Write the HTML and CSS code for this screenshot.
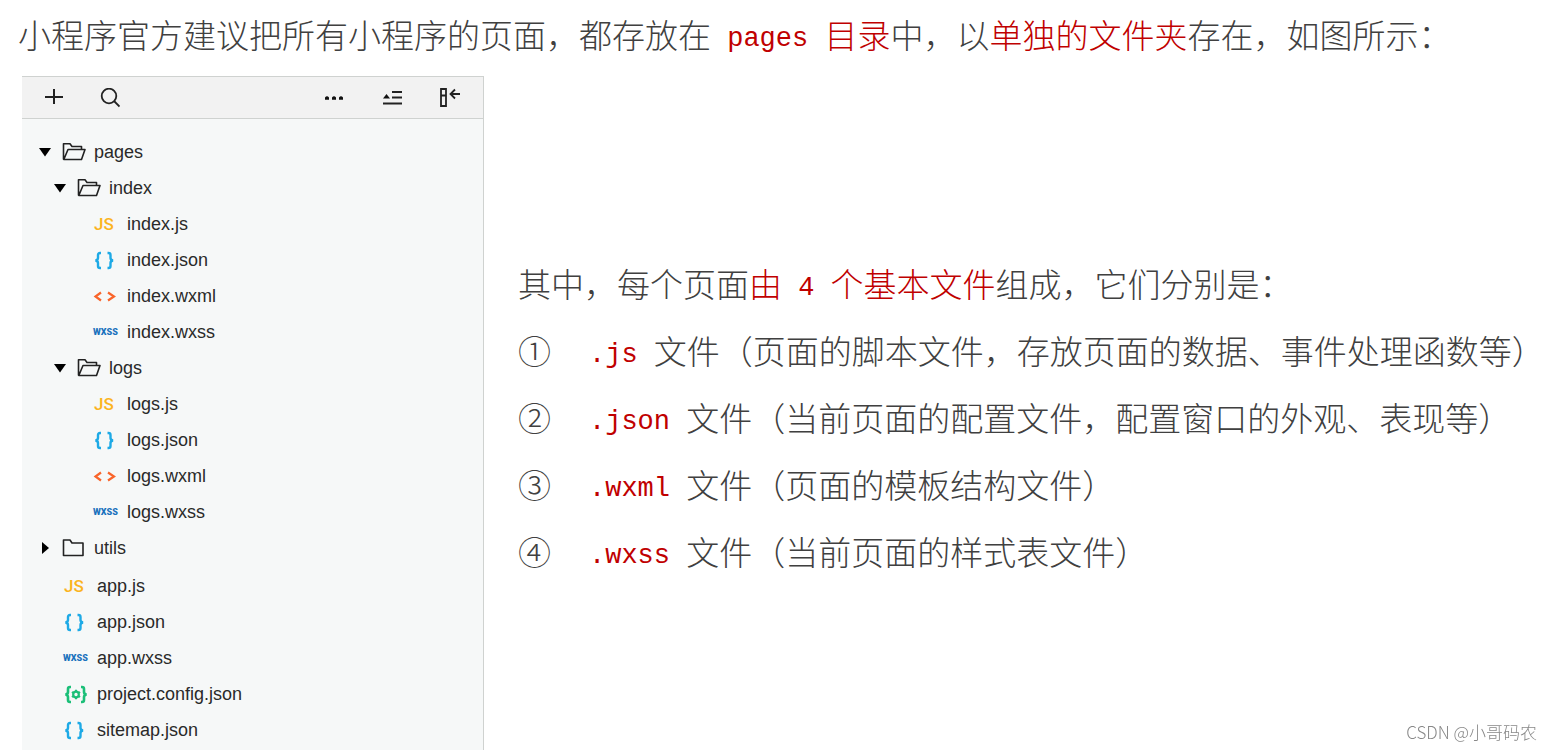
FILE: index.html
```html
<!DOCTYPE html>
<html lang="zh-CN">
<head>
    <meta charset="UTF-8">
    <meta name="viewport" content="width=device-width, initial-scale=1.0">
    <title>小程序页面的组成部分</title>
    <link rel="stylesheet" href="styles.css">
</head>
<body>
    <!-- shared icons -->
    <svg class="sprite" aria-hidden="true">
        <symbol id="arrow-down" viewBox="0 0 12 12"><path d="M0 2h12L6 10.500z"/></symbol>
        <symbol id="arrow-right" viewBox="0 0 12 12"><path d="M3 0v12l7-6z"/></symbol>
        <symbol id="folder-open" viewBox="0 0 24 20">
            <path d="M1.500 17.500V1.800h6.500l2 2.700h9.500v3M1.800 17.500L6 7.500h17l-3.500 10z" fill="none" stroke="#222" stroke-width="1.600" stroke-linejoin="round"/>
        </symbol>
        <symbol id="folder" viewBox="0 0 24 20">
            <path d="M1.500 17.500V2H8l2 3h11v12.500z" fill="none" stroke="#222" stroke-width="1.600" stroke-linejoin="round"/>
        </symbol>
        <symbol id="json" viewBox="0 0 26 20">
            <path d="M8 3H7Q5 3 5 5v3Q5 10 2.500 10.500 5 11 5 13v3q0 2 2 2h1M14.500 3h1q2 0 2 2v3q0 2 2.500 2.500-2.500.5-2.500 2.500v3q0 2-2 2h-1" fill="none" stroke="#1eaae6" stroke-width="2.400"/>
        </symbol>
        <symbol id="wxml" viewBox="0 0 26 20">
            <path d="M8 6.500L2.500 10.500l5.500 4M15 6.500l6 4-6 4" fill="none" stroke="#f9652b" stroke-width="2.200"/>
        </symbol>
        <symbol id="config" viewBox="0 0 26 20">
            <path d="M8 3H7Q5 3 5 5v3Q5 10 2.500 10.500 5 11 5 13v3q0 2 2 2h1M18 3h1q2 0 2 2v3q0 2 2.500 2.500-2.500.5-2.500 2.500v3q0 2-2 2h-1" fill="none" stroke="#1bbf78" stroke-width="2.600"/>
            <circle cx="13" cy="10.500" r="2.800" fill="none" stroke="#1bbf78" stroke-width="2.200"/>
            <path d="M13 5.800v2M13 13.200v2M8.900 8l1.700 1M15.400 12l1.700 1M8.900 13l1.700-1M15.400 9l1.700-1" stroke="#1bbf78" stroke-width="2"/>
        </symbol>
    </svg>

    <p class="text intro">小程序官方建议把所有小程序的页面，都存放在<span class="red"><span class="en"> pages </span>目录</span>中，以<span class="red">单独的文件夹</span>存在，如图所示：</p>

    <main class="content">
        <section class="panel">
            <div class="toolbar">
                <div class="tools-left">
                    <button type="button" aria-label="新建">
                        <svg viewBox="0 0 20 20"><path d="M10 1v15M1 9h18" stroke-width="2"/></svg>
                    </button>
                    <button type="button" aria-label="搜索">
                        <svg viewBox="0 0 20 20"><circle cx="9" cy="8" r="7.300"/><path d="M14 13l5.500 5.500"/></svg>
                    </button>
                </div>
                <div class="tools-right">
                    <button type="button" aria-label="更多">
                        <svg viewBox="0 0 20 20"><path d="M1 11.800V9.500q2-2.500 4 0v2.300zM8 11.800V9.500q2-2.500 4 0v2.300zM15 11.800V9.500q2-2.500 4 0v2.300z" fill="#111" stroke="none"/></svg>
                    </button>
                    <button type="button" aria-label="折叠">
                        <svg viewBox="0 0 20 20"><path d="M10 4h10M10 9.500h10M1 15.500h19"/><path d="M1 10.500L4.500 6 8 10.500z" fill="#111" stroke="none"/></svg>
                    </button>
                    <button type="button" aria-label="收起侧栏">
                        <svg viewBox="0 0 20 20"><path d="M1 1h5v17H1zM1 7.500h5M11 6h9M15 1.500L10.500 6l4.500 4.500"/></svg>
                    </button>
                </div>
            </div>

            <div class="tree">
                <details open>
                    <summary class="row">
                        <svg class="arrow"><use href="#arrow-down"/></svg>
                        <svg class="folder"><use href="#folder-open"/></svg>
                        pages
                    </summary>
                    <div class="children">
                        <details open>
                            <summary class="row">
                                <svg class="arrow"><use href="#arrow-down"/></svg>
                                <svg class="folder"><use href="#folder-open"/></svg>
                                index
                            </summary>
                            <ul class="files children">
                                <li class="row"><span class="icon js">JS</span>index.js</li>
                                <li class="row"><svg class="icon"><use href="#json"/></svg>index.json</li>
                                <li class="row"><svg class="icon"><use href="#wxml"/></svg>index.wxml</li>
                                <li class="row"><span class="icon wxss">WXSS</span>index.wxss</li>
                            </ul>
                        </details>
                        <details open>
                            <summary class="row">
                                <svg class="arrow"><use href="#arrow-down"/></svg>
                                <svg class="folder"><use href="#folder-open"/></svg>
                                logs
                            </summary>
                            <ul class="files children">
                                <li class="row"><span class="icon js">JS</span>logs.js</li>
                                <li class="row"><svg class="icon"><use href="#json"/></svg>logs.json</li>
                                <li class="row"><svg class="icon"><use href="#wxml"/></svg>logs.wxml</li>
                                <li class="row"><span class="icon wxss">WXSS</span>logs.wxss</li>
                            </ul>
                        </details>
                    </div>
                </details>
                <details>
                    <summary class="row">
                        <svg class="arrow"><use href="#arrow-right"/></svg>
                        <svg class="folder"><use href="#folder"/></svg>
                        utils
                    </summary>
                </details>
                <ul class="files root-files">
                    <li class="row"><span class="icon js">JS</span>app.js</li>
                    <li class="row"><svg class="icon"><use href="#json"/></svg>app.json</li>
                    <li class="row"><span class="icon wxss">WXSS</span>app.wxss</li>
                    <li class="row"><svg class="icon"><use href="#config"/></svg>project.config.json</li>
                    <li class="row"><svg class="icon"><use href="#json"/></svg>sitemap.json</li>
                </ul>
            </div>
        </section>

        <section class="text notes">
            <p>其中，每个页面<span class="red">由<span class="en"> 4 </span>个基本文件</span>组成，它们分别是：</p>
            <ul>
                <li><span>①</span><span><span class="en"><span class="red">.js</span> </span>文件（页面的脚本文件，存放页面的数据、事件处理函数等）</span></li>
                <li><span>②</span><span><span class="en"><span class="red">.json</span> </span>文件（当前页面的配置文件，配置窗口的外观、表现等）</span></li>
                <li><span>③</span><span><span class="en"><span class="red">.wxml</span> </span>文件（页面的模板结构文件）</span></li>
                <li><span>④</span><span><span class="en"><span class="red">.wxss</span> </span>文件（当前页面的样式表文件）</span></li>
            </ul>
        </section>
    </main>

    <div class="watermark">CSDN @小哥码农</div>
</body>
</html>
```
FILE: styles.css
```css
* {
    box-sizing: border-box;
}

body {
    margin: 0;
    min-height: 100vh;
    display: flex;
    flex-direction: column;
    background: #fff;
    font-family: "Liberation Sans", "Noto Sans CJK SC", sans-serif;
}

p, ul {
    margin: 0;
    padding: 0;
    list-style: none;
}

.sprite {
    display: none;
}

/* article text */
.text {
    font-family: "Noto Sans CJK SC", sans-serif;
    font-size: 33px;
    font-weight: 300;
    line-height: 67px;
    color: #404040;
}

.en {
    font-family: "Liberation Mono", monospace;
    font-size: 27px;
    line-height: 1;
    vertical-align: 2px;
    white-space: pre;
}

.red {
    color: #c00000;
}

.intro {
    padding: 1px 18px 8px;
}

.content {
    flex: 1;
    display: flex;
    padding-left: 22px;
}

.notes {
    flex: 1;
    padding: 174px 0 0 34px;
}

.notes li {
    display: flex;
    gap: 38px;
}

/* file panel */
.panel {
    flex: 0 0 462px;
    background: #f6f8f8;
    border-top: 1px solid #cfd2d0;
    border-right: 1px solid #cfd2d0;
}

.toolbar {
    display: flex;
    justify-content: space-between;
    align-items: center;
    height: 42px;
    padding: 0 23px 0 22px;
    background: #f2f2f2;
    border-bottom: 1px solid #cfd2d0;
}

.tools-left, .tools-right {
    display: flex;
    gap: 36px;
}

.tools-right {
    gap: 38px;
}

.toolbar button {
    width: 20px;
    height: 20px;
    padding: 0;
    border: none;
    background: none;
    cursor: pointer;
}

.toolbar svg {
    display: block;
    width: 20px;
    height: 20px;
    fill: none;
    stroke: #222;
    stroke-width: 1.8;
}

.tree {
    padding-top: 15px;
    font-size: 18px;
    color: #2a2a2a;
}

.row {
    display: flex;
    align-items: center;
    height: 36px;
}

summary.row {
    gap: 8px;
    padding-left: 17px;
    cursor: pointer;
}

.files .row {
    gap: 8px;
    padding-left: 41px;
}

.children {
    padding-left: 15px;
}

.root-files {
    padding-top: 2px;
}

.files .row .icon {
    flex: none;
    width: 26px;
    height: 20px;
    line-height: 20px;
    font-family: Roboto, sans-serif;
}

.arrow {
    width: 12px;
    height: 12px;
    margin-right: 3px;
    fill: #000;
}

.folder {
    width: 24px;
    height: 20px;
}

.js {
    padding-left: 1px;
    font-size: 17px;
    font-weight: 500;
    color: #fbb41f;
}

.wxss {
    font-size: 9px;
    font-weight: 900;
    color: #1a72bd;
}

.watermark {
    position: fixed;
    right: 15px;
    bottom: 6px;
    font-family: "Noto Sans CJK SC", sans-serif;
    font-size: 17px;
    font-weight: 300;
    color: #888;
}
```
